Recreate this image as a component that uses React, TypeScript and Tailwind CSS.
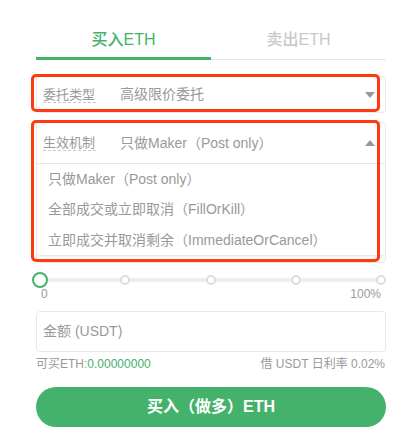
import React from "react";

const font = { fontFamily: '"Liberation Sans", "Noto Sans CJK SC", sans-serif' };

function CaretDown() {
  return (
    <svg width="10" height="6" viewBox="0 0 10 6">
      <path d="M0 0 L10 0 L5 6 Z" fill="#999" />
    </svg>
  );
}
function CaretUp() {
  return (
    <svg width="10" height="6" viewBox="0 0 10 6">
      <path d="M0 6 L10 6 L5 0 Z" fill="#999" />
    </svg>
  );
}

export default function App() {
  const dots = [25, 50, 75, 100];
  return (
    <div className="relative w-[412px] h-[444px] bg-white overflow-hidden" style={font}>
      <div className="ml-[36px] w-[350px] flex flex-col">
        {/* tabs */}
        <div className="flex items-end h-[60px]">
          <div className="flex-1 text-center pt-[28px] pb-[5px] border-b-[3px] border-[#44b26b] text-[16px] leading-[24px] text-[#44b26b] font-medium">
            买入ETH
          </div>
          <div className="flex-1 text-center pt-[28px] pb-[7px] border-b border-[#e6e6e6] text-[16px] leading-[24px] text-[#c8c8c8] font-medium">
            卖出ETH
          </div>
        </div>

        {/* select 1 */}
        <div className="mt-[16px] h-[37px] border border-[#e8e8e8] rounded-[4px] flex items-center pl-[6px] pr-[10px] text-[14px] text-[#999]">
          <span className="border-b border-dashed border-[#c8c8c8] leading-[15px] w-[53px] text-[13px]">委托类型</span>
          <span className="ml-[24px] flex-1">高级限价委托</span>
          <CaretDown />
        </div>

        {/* select 2 */}
        <div className="mt-[9px] h-[141px] border border-[#e8e8e8] rounded-[4px] flex flex-col text-[14px] text-[#999]">
          <div className="h-[40px] flex items-center pl-[6px] pr-[10px]">
            <span className="border-b border-dashed border-[#c8c8c8] leading-[15px] w-[53px] text-[13px]">生效机制</span>
            <span className="ml-[24px] flex-1">只做Maker（Post only）</span>
            <CaretUp />
          </div>
          <div className="border-t border-b border-[#e8e8e8] rounded-b-[4px] shadow-[0_1px_2px_rgba(0,0,0,0.05)] pl-[11px] flex flex-col">
            <div className="h-[30px] flex items-center">只做Maker（Post only）</div>
            <div className="h-[31px] flex items-center">全部成交或立即取消（FillOrKill）</div>
            <div className="h-[30px] flex items-center">立即成交并取消剩余（ImmediateOrCancel）</div>
          </div>
        </div>
      </div>

      {/* slider */}
      <div className="relative ml-[40px] mt-[9px] w-[341px] h-[16px]">
        <div className="absolute left-0 right-0 top-[6px] h-[4px] bg-[#eeeeee] rounded-full" />
        <div className="absolute left-[-8px] top-0 w-[16px] h-[16px] rounded-full border-2 border-[#44b26b] bg-white" />
        {dots.map((d) => (
          <div
            key={d}
            className="absolute top-[3px] w-[10px] h-[10px] -translate-x-1/2 rounded-full border-2 border-[#dddddd] bg-white"
            style={{ left: `${d}%` }}
          />
        ))}
      </div>
      <div className="ml-[41px] w-[340px] flex justify-between text-[12px] leading-[14px] text-[#999] mt-[-1px]">
        <span>0</span>
        <span>100%</span>
      </div>

      <div className="ml-[36px] w-[350px] flex flex-col">
        {/* amount */}
        <div className="mt-[10px] h-[41px] border border-[#e8e8e8] rounded-[4px] flex items-center pl-[6px] text-[14px] text-[#999]">
          金额 (USDT)
        </div>
        {/* info */}
        <div className="mt-[4px] flex justify-between text-[12px] leading-[16px] text-[#999]">
          <span>
            可买ETH:<span className="text-[#44b26b]">0.00000000</span>
          </span>
          <span className="pr-[1px]">借 USDT 日利率 0.02%</span>
        </div>
        {/* button */}
        <div className="mt-[15px] h-[40px] rounded-full bg-[#45b26b] flex items-center justify-center text-white text-[16px] font-bold">
          买入（做多）ETH
        </div>
      </div>

      {/* red annotation boxes */}
      <div className="absolute left-[31px] top-[74px] w-[349px] h-[38px] border-[3px] border-[#ff3a10] rounded-[5px]" />
      <div className="absolute left-[31px] top-[120px] w-[349px] h-[142px] border-[3px] border-[#ff3a10] rounded-[5px]" />
    </div>
  );
}
